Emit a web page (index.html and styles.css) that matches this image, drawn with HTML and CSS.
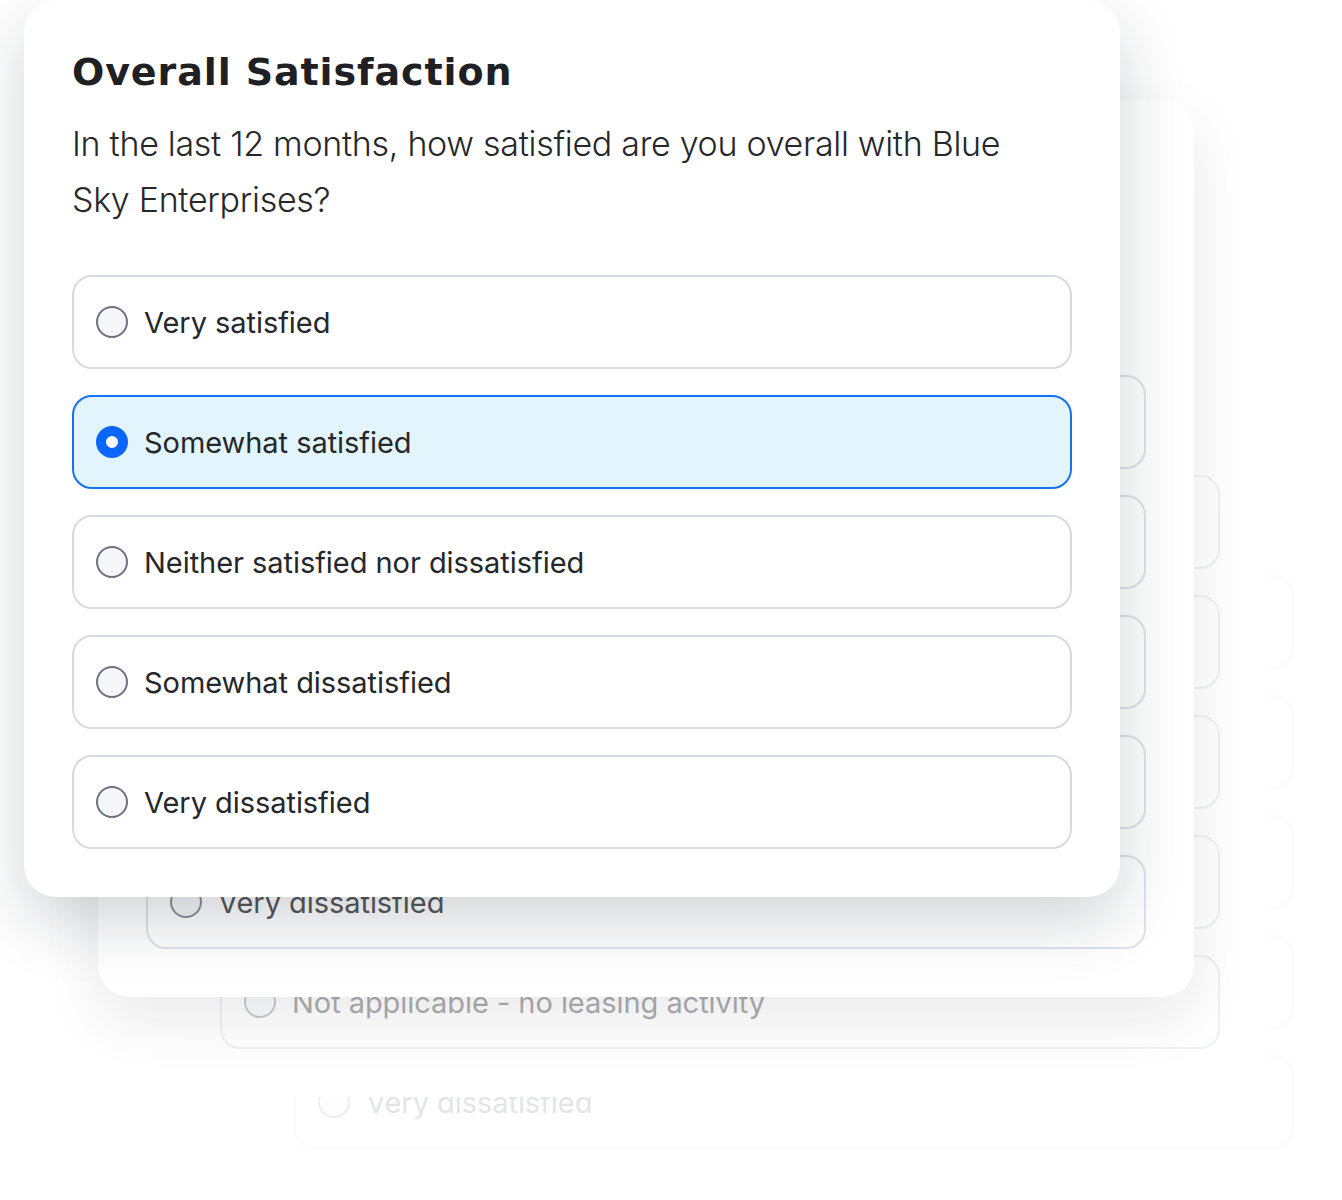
FILE: index.html
```html
<!DOCTYPE html>
<html lang="en">
<head>
    <meta charset="UTF-8">
    <meta name="viewport" content="width=device-width, initial-scale=1.0">
    <title>Survey - Overall Satisfaction</title>
    <link rel="stylesheet" href="styles.css">
</head>
<body>
    <div class="stack">
        <!-- Back cards (furthest first), only the last option shows -->
        <div class="card card-4">
            <div class="card-body">
                <div class="card-head"></div>
                <div class="options">
                    <div class="option"><span class="radio"></span></div>
                    <div class="option"><span class="radio"></span></div>
                    <div class="option"><span class="radio"></span></div>
                    <div class="option"><span class="radio"></span></div>
                    <div class="option"><span class="radio"></span>Very dissatisfied</div>
                </div>
            </div>
        </div>

        <div class="card card-3">
            <div class="card-body">
                <div class="card-head"></div>
                <div class="options">
                    <div class="option"><span class="radio"></span></div>
                    <div class="option"><span class="radio"></span></div>
                    <div class="option"><span class="radio"></span></div>
                    <div class="option"><span class="radio"></span></div>
                    <div class="option"><span class="radio"></span>Not applicable - no leasing activity</div>
                </div>
            </div>
        </div>

        <div class="card card-2">
            <div class="card-body">
                <div class="card-head"></div>
                <div class="options">
                    <div class="option"><span class="radio"></span></div>
                    <div class="option"><span class="radio"></span></div>
                    <div class="option"><span class="radio"></span></div>
                    <div class="option"><span class="radio"></span></div>
                    <div class="option"><span class="radio"></span>Very dissatisfied</div>
                </div>
            </div>
        </div>

        <!-- Front card -->
        <div class="card card-1">
            <div class="card-body">
                <div class="card-head">
                    <h2>Overall Satisfaction</h2>
                    <p class="question">In the last 12 months, how satisfied are you overall with Blue Sky Enterprises?</p>
                </div>
                <div class="options">
                    <div class="option"><span class="radio"></span>Very satisfied</div>
                    <div class="option selected"><span class="radio"></span>Somewhat satisfied</div>
                    <div class="option"><span class="radio"></span>Neither satisfied nor dissatisfied</div>
                    <div class="option"><span class="radio"></span>Somewhat dissatisfied</div>
                    <div class="option"><span class="radio"></span>Very dissatisfied</div>
                </div>
            </div>
        </div>
    </div>
</body>
</html>
```

FILE: styles.css
```css
body {
    font-family: 'Inter', 'Liberation Sans', sans-serif;
    margin: 0;
    padding: 0;
    background-color: #fff;
    color: #26272b;
    overflow: hidden;
}
.stack {
    display: grid;
    padding-left: 24px;
}
.card {
    grid-area: 1 / 1;
    width: 1096px;
    height: 897px;
    box-sizing: border-box;
    background-color: #fff;
    border-radius: 32px;
    overflow: hidden;
}
.card-1 {
    z-index: 4;
    box-shadow: 0 24px 64px rgba(17, 24, 39, 0.19);
}
.card-2 {
    z-index: 3;
    margin-left: 74px;
    margin-top: 100px;
    box-shadow: 0 22px 60px rgba(17, 24, 39, 0.09);
}
.card-3 {
    z-index: 2;
    margin-left: 148px;
    margin-top: 200px;
}
.card-4 {
    z-index: 1;
    margin-left: 222px;
    margin-top: 300px;
}
.card-body {
    padding: 48px;
}
.card-2 .card-body {
    opacity: 0.78;
}
.card-3 .card-body {
    opacity: 0.38;
}
.card-4 .card-body {
    opacity: 0.12;
}
.card-head {
    height: 180px;
}
h2 {
    margin: 0;
    font-family: 'DejaVu Sans', sans-serif;
    font-size: 38px;
    line-height: 48px;
    font-weight: 700;
    letter-spacing: 0.9px;
    color: #1f2024;
}
.question {
    max-width: 960px;
    margin: 20px 0 0;
    font-size: 34px;
    line-height: 56px;
    font-weight: 300;
    letter-spacing: -0.3px;
    color: #26272b;
}
.options {
    display: flex;
    flex-direction: column;
    gap: 26px;
    margin-top: 47px;
}
.option {
    display: flex;
    align-items: center;
    gap: 16px;
    height: 94px;
    box-sizing: border-box;
    padding: 0 22px;
    border: 2px solid #d7dadf;
    border-radius: 20px;
    font-size: 29px;
    font-weight: 400;
    letter-spacing: -0.05px;
    color: #26272b;
}
.radio {
    width: 32px;
    height: 32px;
    box-sizing: border-box;
    border: 2px solid #6b7280;
    border-radius: 50%;
    background-color: #f4f6f7;
    flex-shrink: 0;
}
.option.selected {
    background-color: #e2f5fd;
    border-color: #1672f0;
}
.option.selected .radio {
    border: 10px solid #0a66ff;
    background-color: #fff;
}
```
